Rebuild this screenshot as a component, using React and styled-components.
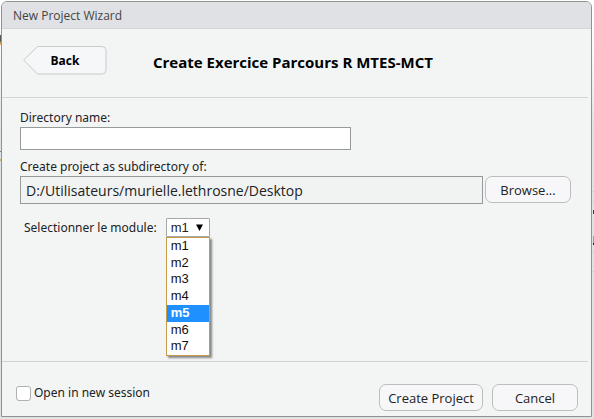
import React, { useState } from "react";
import styled, { createGlobalStyle, css } from "styled-components";

const uiFont = '"Open Sans", "Noto Sans", sans-serif';
const labelFont = '"Noto Sans", "Open Sans", sans-serif';

const GlobalStyle = createGlobalStyle`
  *, *::before, *::after { box-sizing: border-box; }
  body {
    margin: 0;
    background: #e3e5e5;
    font-family: ${labelFont};
    font-size: 12px;
    color: #222;
  }
`;

const Backdrop = styled.div`
  padding: 1px 2px 1px 1px;
  background:
    linear-gradient(
      transparent 191px, #c3c5c5 191px 192px, transparent 192px 201px,
      #c3c5c5 201px 202px, transparent 202px 210px, #174a6b 210px 214px,
      transparent 214px 236px, #62a8ec 236px 243px, #222 243px 245px,
      transparent 245px 251px, #c3c5c5 251px 252px, transparent 252px 271px,
      #c3c5c5 271px 272px, transparent 272px
    ) right / 1px 100% no-repeat,
    linear-gradient(
      transparent 35px, #555 35px 41px, #e0b060 43px 45px, transparent 45px 151px,
      #777 151px 152px, transparent 152px 159px, #d2b070 159px 161px, transparent 161px
    ) left / 1px 100% no-repeat,
    linear-gradient(#fff 0 24px, #f1f2f2 80px, #dfe1e2 128px);
`;

const Dialog = styled.form`
  border: 1px solid #8f9392;
  border-radius: 6px 6px 0 0;
  background: #f3f5f4;
`;

const TitleBar = styled.header`
  height: 27px;
  padding-left: 11px;
  border-bottom: 1px solid #d5d6da;
  border-radius: 5px 5px 0 0;
  background: #e0e1e5;
  color: #444;
  font-family: ${uiFont};
  line-height: 28px;
`;

const WizardHeader = styled.div`
  display: flex;
  align-items: center;
  height: 69px;
  margin-right: 3px;
  padding: 0 0 6px 21px;
  border-bottom: 1px solid #d4d6d6;
`;

const BackButton = styled.button`
  display: grid;
  align-items: center;
  width: 84px;
  height: 30px;
  padding: 0;
  border: 0;
  background: none;
  color: #000;
  font: bold 12px ${uiFont};

  & > * { grid-area: 1 / 1; }
`;

const BackLabel = styled.span`
  z-index: 1;
`;

const PageTitle = styled.h1`
  flex: 1;
  margin: 0;
  padding: 3px 0 0 46px;
  color: #000;
  font-family: ${uiFont};
  font-size: 15px;
  font-weight: bold;
  line-height: 20px;
  white-space: nowrap;
`;

const Fields = styled.div`
  min-height: 264px;
  margin-right: 3px;
  padding: 10px 17px 0 18px;
  border-bottom: 1px solid #d0d3d3;
`;

const FieldLabel = styled.label`
  display: block;
  height: 19px;
  line-height: 19px;
`;

const fieldBox = css`
  border: 1px solid #969a99;
  border-radius: 0;
  outline: 0;
  color: #222;
`;

const NameInput = styled.input`
  ${fieldBox}
  display: block;
  width: 60%;
  height: 23px;
  margin-bottom: 7px;
  padding: 0 5px;
  background: #fff;
  font: 12px ${uiFont};
`;

const PathRow = styled.div`
  display: flex;
  gap: 2px;
`;

const PathInput = styled.input`
  ${fieldBox}
  flex: 1;
  min-width: 0;
  height: 28px;
  padding: 0 5px;
  background: #f1f3f2;
  font: 14px ${uiFont};
`;

const PushButton = styled.button`
  width: ${(p) => (p.$wide ? 104 : 86)}px;
  height: 27px;
  padding: 0;
  border: 1px solid #bcbebe;
  border-radius: 7px;
  background: #f7f7f9;
  color: #222;
  font: 13px ${uiFont};
`;

const ModuleRow = styled.div`
  display: flex;
  align-items: center;
  gap: 9px;
  margin: 14px 0 0 4px;
`;

const Picker = styled.div`
  position: relative;
  display: grid;
  width: 44px;

  & > svg { grid-area: 1 / 1; place-self: center end; margin-right: 7px; pointer-events: none; }
`;

const ModuleSelect = styled.select`
  grid-area: 1 / 1;
  appearance: none;
  width: 100%;
  height: 19px;
  padding: 0 0 0 4px;
  border: 1px solid #a5a8a8;
  border-radius: 1px;
  background: #fff;
  color: #222;
  font: 13px "Liberation Sans", sans-serif;
`;

const OptionList = styled.ul`
  position: absolute;
  top: 100%;
  left: 0;
  z-index: 2;
  display: grid;
  grid-auto-rows: 1fr;
  width: 100%;
  height: 119px;
  margin: 0;
  padding: 0;
  border: 1px solid #c79a48;
  background: #fff;
  box-shadow: 2px 2px 2px #858787;
  list-style: none;
`;

const Option = styled.li`
  padding-left: 4px;
  background: ${(p) => (p.$active ? "#1e90ff" : "transparent")};
  color: ${(p) => (p.$active ? "#fff" : "#111")};
  font: ${(p) => (p.$active ? "bold" : "normal")} 13px/16px "Liberation Sans", sans-serif;
`;

const Footer = styled.footer`
  display: flex;
  align-items: center;
  gap: 9px;
  padding: 22px 13px 5px 14px;
`;

const SessionLabel = styled.label`
  display: flex;
  align-items: center;
  gap: 3px;
  margin: 0 auto 9px 0;
  line-height: 18px;
`;

const Checkbox = styled.input`
  appearance: none;
  width: 15px;
  height: 15px;
  margin: 0;
  border: 1px solid #aeb0b1;
  border-radius: 3px;
  background: #fff;
  &:checked { background: #1e90ff; }
`;

const modules = ["m1", "m2", "m3", "m4", "m5", "m6", "m7"];

export default function App() {
  const [hovered, setHovered] = useState("m5");
  const [name, setName] = useState("");

  return (
    <>
      <GlobalStyle />
      <Backdrop>
        <Dialog onSubmit={(e) => e.preventDefault()}>
          <TitleBar>New Project Wizard</TitleBar>
          <WizardHeader>
            <BackButton type="button">
              <svg width="84" height="30" viewBox="0 0 84 30" aria-hidden="true">
                <path
                  d="M14.5 1.5H79a4 4 0 0 1 4 4V25a4 4 0 0 1-4 4H14.5L.7 15.2z"
                  fill="#f6f7f8"
                  stroke="#c9cbcc"
                />
              </svg>
              <BackLabel>Back</BackLabel>
            </BackButton>
            <PageTitle>Create Exercice Parcours R MTES-MCT</PageTitle>
          </WizardHeader>
          <Fields>
            <FieldLabel htmlFor="dirname">Directory name:</FieldLabel>
            <NameInput id="dirname" value={name} onChange={(e) => setName(e.target.value)} />
            <FieldLabel htmlFor="parent">Create project as subdirectory of:</FieldLabel>
            <PathRow>
              <PathInput id="parent" readOnly value="D:/Utilisateurs/murielle.lethrosne/Desktop" />
              <PushButton type="button">Browse...</PushButton>
            </PathRow>
            <ModuleRow>
              <label htmlFor="module">Selectionner le module:</label>
              <Picker>
                <ModuleSelect id="module" defaultValue="m1">
                  {modules.map((m) => (
                    <option key={m}>{m}</option>
                  ))}
                </ModuleSelect>
                <svg width="7" height="7" viewBox="0 0 7 7" aria-hidden="true">
                  <path d="M0 .5h7L3.5 7z" fill="#000" />
                </svg>
                <OptionList role="listbox" aria-label="Modules">
                  {modules.map((m) => (
                    <Option
                      key={m}
                      role="option"
                      aria-selected={m === hovered}
                      $active={m === hovered}
                      onMouseEnter={() => setHovered(m)}
                    >
                      {m}
                    </Option>
                  ))}
                </OptionList>
              </Picker>
            </ModuleRow>
          </Fields>
          <Footer>
            <SessionLabel>
              <Checkbox type="checkbox" />
              Open in new session
            </SessionLabel>
            <PushButton type="submit" $wide>Create Project</PushButton>
            <PushButton type="button">Cancel</PushButton>
          </Footer>
        </Dialog>
      </Backdrop>
    </>
  );
}
